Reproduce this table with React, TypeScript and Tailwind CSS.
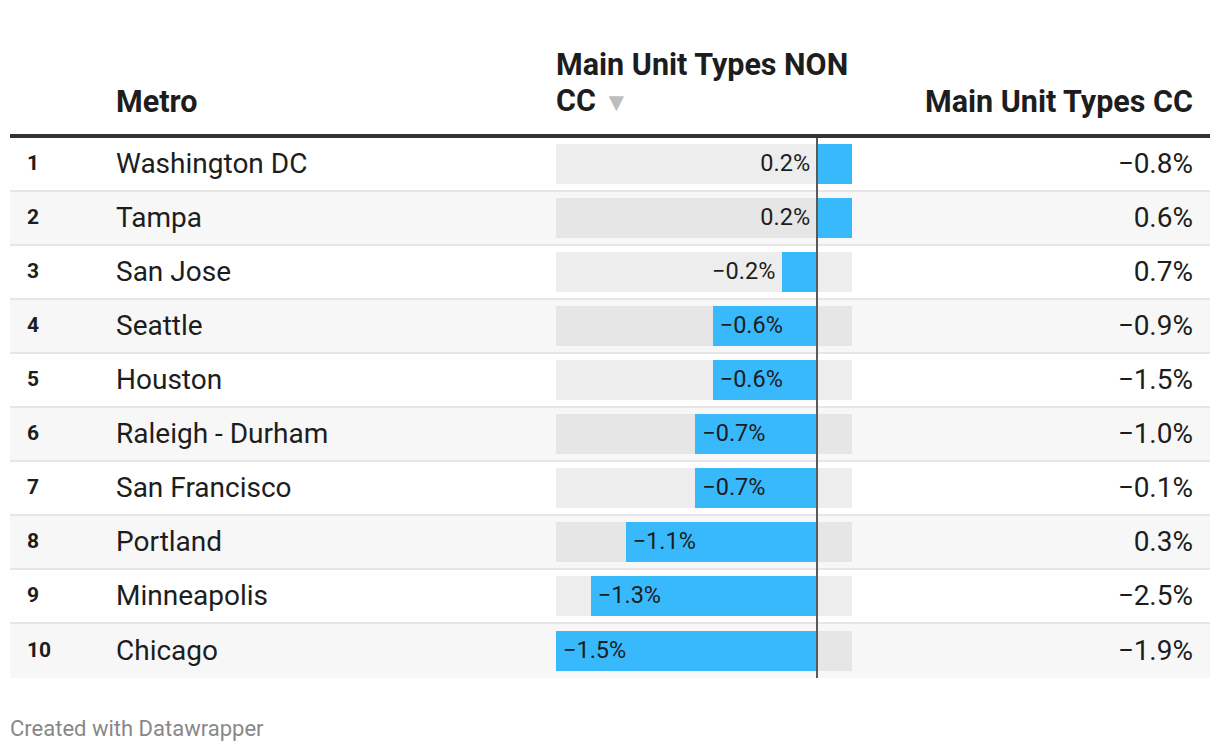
import React from "react"

type Row = { rank: number; metro: string; nonCC: number; cc: number }

const rows: Row[] = [
  { rank: 1, metro: "Washington DC", nonCC: 0.2, cc: -0.8 },
  { rank: 2, metro: "Tampa", nonCC: 0.2, cc: 0.6 },
  { rank: 3, metro: "San Jose", nonCC: -0.2, cc: 0.7 },
  { rank: 4, metro: "Seattle", nonCC: -0.6, cc: -0.9 },
  { rank: 5, metro: "Houston", nonCC: -0.6, cc: -1.5 },
  { rank: 6, metro: "Raleigh - Durham", nonCC: -0.7, cc: -1.0 },
  { rank: 7, metro: "San Francisco", nonCC: -0.7, cc: -0.1 },
  { rank: 8, metro: "Portland", nonCC: -1.1, cc: 0.3 },
  { rank: 9, metro: "Minneapolis", nonCC: -1.3, cc: -2.5 },
  { rank: 10, metro: "Chicago", nonCC: -1.5, cc: -1.9 },
]

// bar domain -1.5 .. 0.2 over 296px
const MIN = -1.5
const MAX = 0.2
const WIDTH = 296
const scale = WIDTH / (MAX - MIN)
const zero = -MIN * scale

const fmt = (v: number) => (v < 0 ? "\u2212" : "") + Math.abs(v).toFixed(1) + "%"

function BarCell({ value, striped }: { value: number; striped: boolean }) {
  const w = Math.abs(value) * scale
  const left = value < 0 ? zero - w : zero
  const inside = value < 0 && w > 80
  return (
    <div className={`relative h-[40px] w-[296px] ${striped ? "bg-[#e6e6e6]" : "bg-[#ededed]"}`}>
      <div className="absolute top-0 h-full bg-[#37b9fc]" style={{ left, width: w }} />
      {inside ? (
        <span className="absolute top-0 flex h-full items-center text-[23.5px]" style={{ left: left + 7 }}>
          {fmt(value)}
        </span>
      ) : (
        <span
          className="absolute top-0 flex h-full items-center text-[23.5px]"
          style={{ right: WIDTH - (value < 0 ? left : zero) + 7 }}
        >
          {fmt(value)}
        </span>
      )}
    </div>
  )
}

export default function App() {
  return (
    <div className="bg-white px-[10px] text-[#1d1d1d] font-['Roboto',sans-serif]">
      <div className="flex h-[138px] items-end border-b-4 border-[#333] pb-[14px] text-[30.5px] font-bold leading-[36px]">
        <div className="w-[106px]" />
        <div className="w-[440px]">Metro</div>
        <div className="w-[340px] whitespace-nowrap">
          Main Unit Types NON
          <br />
          CC <span className="text-[26px] text-[#bdbdbd]">▼</span>
        </div>
        <div className="flex-1 pr-[17px] text-right">Main Unit Types CC</div>
      </div>

      {rows.map((r, i) => {
        const striped = i % 2 === 1
        return (
          <div
            key={r.rank}
            className={`flex h-[54px] items-center ${i < rows.length - 1 ? "border-b-2 border-[#e6e6e6]" : ""} ${
              striped ? "bg-[#f7f7f7]" : "bg-white"
            }`}
          >
            <div className="w-[106px] pl-[17px] text-[21px] font-bold">{r.rank}</div>
            <div className="w-[440px] text-[28px]">{r.metro}</div>
            <div className="relative flex h-full w-[340px] items-center">
              <BarCell value={r.nonCC} striped={striped} />
              <div
                className={`absolute top-0 w-[2px] bg-[#5a5a5a] ${i < rows.length - 1 ? "bottom-[-2px]" : "bottom-0"}`}
                style={{ left: zero - 1 }}
              />
            </div>
            <div className="flex-1 pr-[17px] text-right text-[28px]">{fmt(r.cc)}</div>
          </div>
        )
      })}

      <div className="pb-[16px] pt-[38px] text-[22px] leading-[26px] text-[#888]">Created with Datawrapper</div>
    </div>
  )
}
